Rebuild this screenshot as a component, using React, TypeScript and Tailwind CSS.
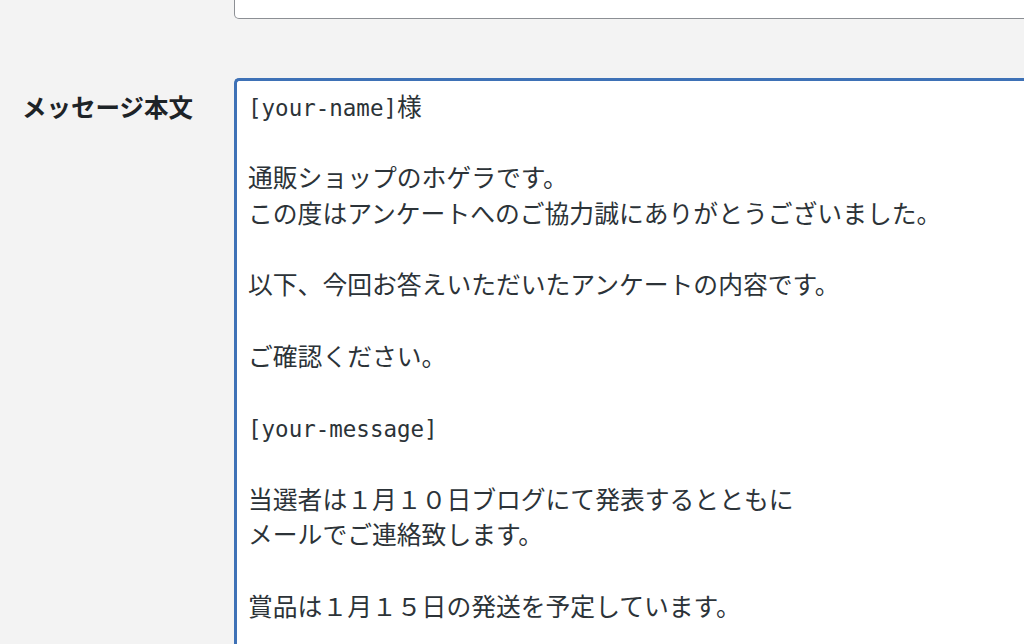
const mono = "font-['DejaVu_Sans_Mono','Noto_Sans_CJK_JP',monospace] text-[22.5px]";

const lines: (string | { code: string; tail?: string })[] = [
  { code: "[your-name]", tail: "様" },
  "",
  "通販ショップのホゲラです。",
  "この度はアンケートへのご協力誠にありがとうございました。",
  "",
  "以下、今回お答えいただいたアンケートの内容です。",
  "",
  "ご確認ください。",
  "",
  { code: "[your-message]" },
  "",
  "当選者は１月１０日ブログにて発表するとともに",
  "メールでご連絡致します。",
  "",
  "賞品は１月１５日の発送を予定しています。",
  "",
];

export default function App() {
  return (
    <div className="h-[644px] w-[1024px] overflow-hidden bg-[#f3f3f3] font-['Noto_Sans_CJK_JP',sans-serif] text-[#2c3338]">
      <div className="flex">
        <div className="w-[234px] shrink-0" />
        <div className="h-[19px] w-[820px] shrink-0 rounded-b-[5px] border-x border-b border-[#8c8f94] bg-white" />
      </div>

      <div className="mt-[59px] flex">
        <div className="w-[234px] shrink-0 pl-[22px] pt-[11px]">
          <span className="text-[24.5px] font-bold leading-[36px] text-[#1d2327]">メッセージ本文</span>
        </div>
        <div className="h-[600px] w-[820px] shrink-0 rounded-[5px] border-[3px] border-r-0 border-[#3e71b6] bg-white pl-[11px] pt-[7px]">
          <div className="text-[24.8px] leading-[35.7px] whitespace-pre">
            {lines.map((l, i) =>
              typeof l === "string" ? (
                <div key={i} className="h-[35.7px]">
                  {l}
                </div>
              ) : (
                <div key={i} className="h-[35.7px]">
                  <span className={mono}>{l.code}</span>
                  {l.tail}
                </div>
              ),
            )}
          </div>
        </div>
      </div>
    </div>
  );
}
